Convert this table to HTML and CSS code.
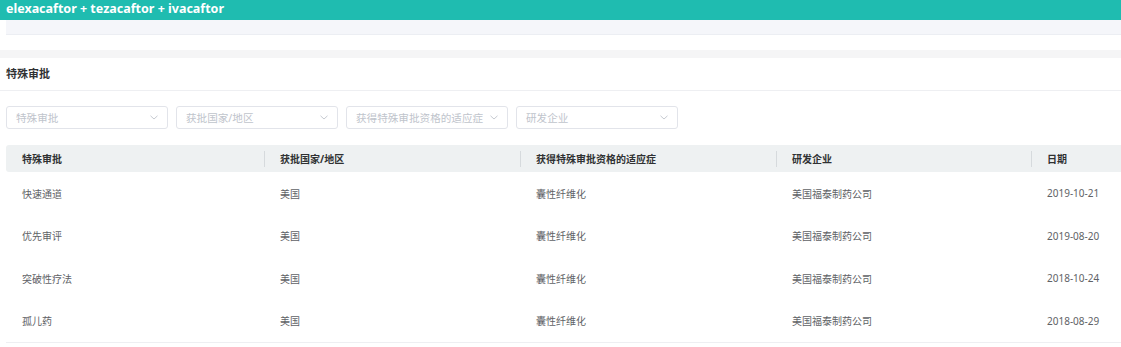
FILE: index.html
```html
<!DOCTYPE html>
<html lang="zh">
<head>
<meta charset="utf-8">
<title>特殊审批</title>
<link rel="stylesheet" href="styles.css">
</head>
<body>
<div class="page">
  <header class="topbar">elexacaftor + tezacaftor + ivacaftor</header>
  <div class="summary"></div>
  <div class="strip"></div>
  <section class="section">
    <div class="section-head">特殊审批</div>
    <div class="filters">
      <div class="select"><span>特殊审批</span><svg class="chev" viewBox="0 0 8 5" width="8" height="5"><path d="M0.5 0.8 L4 4 L7.5 0.8" fill="none" stroke="#c0c4cc" stroke-width="0.9"/></svg></div>
      <div class="select"><span>获批国家/地区</span><svg class="chev" viewBox="0 0 8 5" width="8" height="5"><path d="M0.5 0.8 L4 4 L7.5 0.8" fill="none" stroke="#c0c4cc" stroke-width="0.9"/></svg></div>
      <div class="select"><span>获得特殊审批资格的适应症</span><svg class="chev" viewBox="0 0 8 5" width="8" height="5"><path d="M0.5 0.8 L4 4 L7.5 0.8" fill="none" stroke="#c0c4cc" stroke-width="0.9"/></svg></div>
      <div class="select"><span>研发企业</span><svg class="chev" viewBox="0 0 8 5" width="8" height="5"><path d="M0.5 0.8 L4 4 L7.5 0.8" fill="none" stroke="#c0c4cc" stroke-width="0.9"/></svg></div>
    </div>
    <div class="table-wrap">
      <div class="table">
        <div class="thead">
          <div class="th">特殊审批</div>
          <div class="th sep">获批国家/地区</div>
          <div class="th sep">获得特殊审批资格的适应症</div>
          <div class="th sep">研发企业</div>
          <div class="th sep">日期</div>
        </div>
        <div class="tr">
          <div class="td">快速通道</div><div class="td">美国</div><div class="td">囊性纤维化</div><div class="td">美国福泰制药公司</div><div class="td">2019-10-21</div>
        </div>
        <div class="tr">
          <div class="td">优先审评</div><div class="td">美国</div><div class="td">囊性纤维化</div><div class="td">美国福泰制药公司</div><div class="td">2019-08-20</div>
        </div>
        <div class="tr">
          <div class="td">突破性疗法</div><div class="td">美国</div><div class="td">囊性纤维化</div><div class="td">美国福泰制药公司</div><div class="td">2018-10-24</div>
        </div>
        <div class="tr last">
          <div class="td">孤儿药</div><div class="td">美国</div><div class="td">囊性纤维化</div><div class="td">美国福泰制药公司</div><div class="td">2018-08-29</div>
        </div>
      </div>
    </div>
  </section>
</div>
</body>
</html>
```

FILE: styles.css
```css
html, body {
  margin: 0;
  padding: 0;
  overflow: hidden;
  background: #ffffff;
}
body {
  font-family: "Noto Sans", "Noto Sans CJK SC", sans-serif;
  color: #606266;
}
.page {
  width: 100%;
}
.topbar {
  height: 20px;
  line-height: 18px;
  background: #1fbcb0;
  color: #ffffff;
  font-weight: 700;
  font-size: 12.5px;
  padding-left: 6px;
}
.summary {
  margin-left: 6px;
  height: 14px;
  background: #f5f6fa;
  border-bottom: 1px solid #eceef3;
}
.strip {
  margin-top: 15px;
  height: 8px;
  background: #f5f5f6;
}
.section-head {
  height: 32px;
  line-height: 32px;
  padding-left: 6px;
  font-size: 11px;
  font-weight: 700;
  color: #303133;
  border-bottom: 1px solid #eeeff2;
}
.filters {
  display: flex;
  gap: 8px;
  padding: 15px 6px 0;
}
.select {
  box-sizing: border-box;
  width: 162px;
  height: 23px;
  border: 1px solid #e2e4ea;
  border-radius: 3px;
  display: flex;
  align-items: center;
  justify-content: space-between;
  padding: 0 9px 0 9px;
  font-size: 10.6px;
  color: #c0c4cc;
}
.chev {
  display: block;
}
.table-wrap {
  margin: 16px 0 0 6px;
  overflow: hidden;
}
.table {
  width: 1281px;
}
.thead {
  display: grid;
  grid-template-columns: 258px 256px 256px 255px 256px;
  background: #eef1f2;
  border-radius: 3px;
  padding: 6px 0 5px;
}
.th {
  height: 16px;
  line-height: 16px;
  padding-left: 16px;
  font-size: 10px;
  font-weight: 700;
  color: #303133;
}
.th.sep {
  border-left: 1px solid #d6dadd;
  padding-left: 15px;
}
.tr {
  display: grid;
  grid-template-columns: 258px 256px 256px 255px 256px;
  height: 42.5px;
  align-items: center;
}
.tr.last {
  border-bottom: 1px solid #eeeff2;
}
.td {
  padding-left: 16px;
  font-size: 10px;
  color: #606266;
}
```
